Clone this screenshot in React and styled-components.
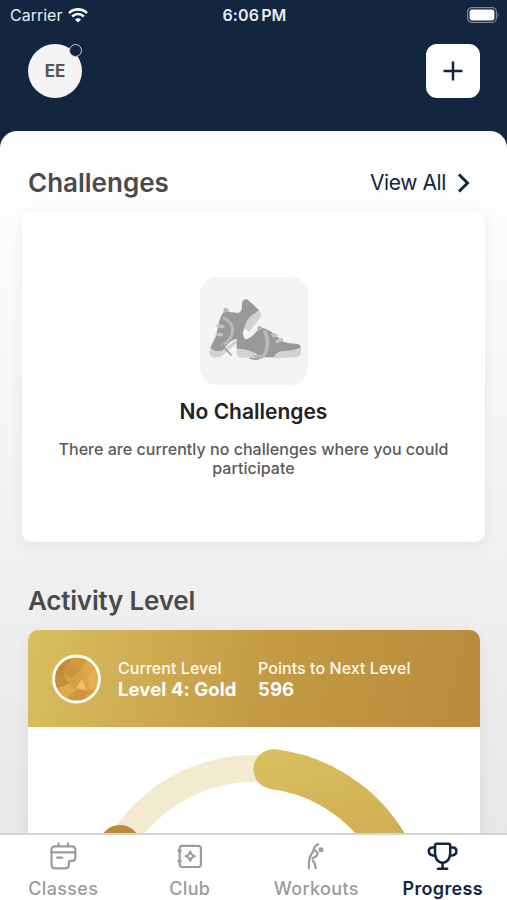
import React from "react";
import styled, { createGlobalStyle } from "styled-components";

const colors = {
  navy: "#13253f",
  white: "#ffffff",
  heading: "#4a4a4a",
  text: "#222222",
  muted: "#5a5a5a",
  tabIdle: "#9b9b9b",
  gold: "#d9bf5f",
  goldDark: "#b98b3b",
  goldPale: "#f3ebd0",
};

const GlobalStyle = createGlobalStyle`
  * {
    box-sizing: border-box;
  }
  body {
    margin: 0;
    background: ${colors.navy};
    font-family: Inter, "Liberation Sans", sans-serif;
  }
  h1, h2, h3, p {
    margin: 0;
  }
`;

const Screen = styled.div`
  display: flex;
  flex-direction: column;
  height: 900px;
  overflow: hidden;
  background: ${colors.navy};
`;

const StatusBar = styled.div`
  display: grid;
  grid-template-columns: 1fr auto 1fr;
  align-items: center;
  height: 30px;
  flex-shrink: 0;
  padding: 0 8px 0 10px;
  color: #e6edf5;
`;

const Carrier = styled.div`
  display: flex;
  align-items: center;
  gap: 6px;
  font-size: 16px;
`;

const Clock = styled.div`
  font-size: 16px;
  font-weight: 600;
  letter-spacing: 0.1px;
  word-spacing: -2px;
`;

const BatterySlot = styled.div`
  display: flex;
  justify-content: flex-end;
`;

const Header = styled.header`
  display: flex;
  justify-content: space-between;
  align-items: flex-start;
  height: 101px;
  flex-shrink: 0;
  padding: 14px 27px 0 28px;
`;

const Avatar = styled.div`
  position: relative;
  display: flex;
  align-items: center;
  justify-content: center;
  width: 54px;
  height: 54px;
  border-radius: 50%;
  background: #f4f4f4;
  color: #555555;
  font-size: 17px;
  font-weight: 700;
`;

const StatusDot = styled.span`
  position: absolute;
  top: 0;
  right: 0;
  width: 13px;
  height: 13px;
  border: 1.5px solid #cbd0d8;
  border-radius: 50%;
  background: ${colors.navy};
`;

const AddButton = styled.button`
  display: flex;
  align-items: center;
  justify-content: center;
  width: 54px;
  height: 54px;
  padding: 0;
  border: none;
  border-radius: 11px;
  background: ${colors.white};
  color: ${colors.navy};
`;

const Content = styled.main`
  display: flex;
  flex-direction: column;
  flex: 1;
  min-height: 0;
  overflow: hidden;
  border-radius: 17px 17px 0 0;
  background: linear-gradient(#ffffff, #fcfcfc 14%, #e7e7e7);
`;

const SectionHead = styled.div`
  display: flex;
  align-items: center;
  justify-content: space-between;
  height: 32px;
  flex-shrink: 0;
  margin-top: ${({ $top }) => $top}px;
  padding: 0 37px 0 28px;
`;

const SectionTitle = styled.h2`
  color: ${colors.heading};
  font-size: 26px;
  font-weight: 600;
  line-height: 32px;
  letter-spacing: ${({ $spacing }) => $spacing || 0}px;
`;

const ViewAll = styled.a`
  display: flex;
  align-items: center;
  gap: 11px;
  color: ${colors.navy};
  font-size: 21px;
  line-height: 32px;
  letter-spacing: -0.4px;
`;

const EmptyCard = styled.section`
  display: flex;
  flex-direction: column;
  align-items: center;
  flex-shrink: 0;
  height: 330px;
  margin: 13px 22px 0;
  padding-top: 65px;
  border-radius: 10px;
  background: ${colors.white};
  box-shadow: 0 3px 16px rgba(0, 0, 0, 0.06);
`;

const PictureTile = styled.div`
  display: flex;
  width: 108px;
  height: 108px;
  border-radius: 17px;
  background: #f4f4f4;
`;

const EmptyTitle = styled.h3`
  margin-top: 13px;
  color: ${colors.text};
  font-size: 21px;
  font-weight: 600;
  line-height: 28px;
`;

const EmptyText = styled.p`
  width: 420px;
  margin-top: 14px;
  color: ${colors.muted};
  font-size: 16px;
  font-weight: 500;
  line-height: 19px;
  letter-spacing: 0.03px;
  text-align: center;
`;

const LevelCard = styled.section`
  flex-shrink: 0;
  height: 420px;
  margin: 13px 27px 0 28px;
  overflow: hidden;
  border-radius: 10px;
  background: ${colors.white};
  box-shadow: 0 3px 16px rgba(0, 0, 0, 0.06);
`;

const LevelBanner = styled.div`
  display: flex;
  align-items: center;
  height: 97px;
  padding-left: 24px;
  background: linear-gradient(
    103deg,
    ${colors.gold} 0%,
    #c49a45 52%,
    ${colors.goldDark} 100%
  );
  color: ${colors.white};
`;

const Stat = styled.div`
  width: ${({ $width }) => $width}px;
  margin-left: ${({ $left }) => $left}px;
  padding-top: 2px;
  white-space: nowrap;
`;

const StatLabel = styled.div`
  color: #fffaf0;
  font-size: 16px;
  font-weight: 500;
  line-height: 20px;
  letter-spacing: 0.06px;
`;

const StatValue = styled.div`
  font-size: 18.5px;
  font-weight: 700;
  line-height: 23px;
  letter-spacing: 0.1px;
`;

const RingArea = styled.div`
  display: flex;
  justify-content: center;
`;

const TabBar = styled.nav`
  display: grid;
  grid-template-columns: repeat(4, 1fr);
  height: 67px;
  flex-shrink: 0;
  padding-right: 1px;
  border-top: 2px solid #d3d3d3;
  background: ${colors.white};
`;

const Tab = styled.div`
  display: flex;
  flex-direction: column;
  align-items: center;
  padding-top: 7px;
  color: ${({ $active }) => ($active ? colors.navy : colors.tabIdle)};
  font-size: 18px;
  font-weight: ${({ $active }) => ($active ? 600 : 500)};
  line-height: 22px;
  letter-spacing: 0.35px;
`;

const TabIcon = styled.svg`
  display: block;
  width: 32px;
  height: 28px;
  margin-bottom: 8px;
  overflow: visible;
  fill: none;
  stroke: currentColor;
  stroke-width: ${({ $weight }) => $weight || 2.2};
  stroke-linecap: round;
  stroke-linejoin: round;
`;

const WifiIcon = () => (
  <svg width="20" height="15" viewBox="0 0 20 15" fill="none" stroke="#f4f8fc">
    <path d="M1 5.1a12.8 12.8 0 0 1 18 0" strokeWidth="2.6" />
    <path d="M4.2 8.5a8.2 8.2 0 0 1 11.6 0" strokeWidth="2.5" />
    <path d="M10 14.6 6.9 11.5a4.4 4.4 0 0 1 6.2 0z" fill="#f4f8fc" stroke="none" />
  </svg>
);

const BatteryIcon = () => (
  <svg width="32" height="16" viewBox="0 0 32 16">
    <rect x="0.6" y="0.6" width="28.8" height="14.8" rx="4.2" fill="none" stroke="#7d8899" strokeWidth="1.2" />
    <rect x="2.6" y="2.6" width="24.8" height="10.8" rx="2.6" fill="#ffffff" />
    <path d="M30.6 5.8c1.4.7 1.4 3.7 0 4.4z" fill="#7d8899" />
  </svg>
);

const ShoesPicture = () => (
  <svg width="108" height="108" viewBox="30 35 324 324" fill="none" strokeLinecap="round" strokeLinejoin="round">
    {/* standing shoe */}
    <path d="M205 130 213 145 212 155 178 199 162 188 168 166z" fill="#d2d2d2" />
    <path d="M62 246 100 254 136 224 140 234 95 272Q82 280 68 276 57 271 58 260z" fill="#d2d2d2" />
    <path
      d="M98 142 112 139 145 143Q156 138 156 125 154 106 166 102 173 100 178 108L206 133Q204 140 188 148 170 162 166 178L158 204Q160 216 166 222H140L136 221Q116 228 99 255 76 262 61 247L78 212 88 166z"
      fill="#999999"
    />
    <path d="M101 130Q104 125 110 128L120 138 100 142z" fill="#b9b9b9" />
    {/* lying shoe */}
    <path d="M140 254 190 254 196 270 189 277H148Q138 270 140 254z" fill="#d2d2d2" />
    <path d="M190 276 256 276Q262 260 282 258L332 246Q337 270 322 275L260 279z" fill="#d2d2d2" />
    <path
      d="M140 252V220L167 222Q184 220 202 195 212 184 226 190L244 199 280 229Q300 236 321 235 334 238 331 248 306 257 278 258 260 260 253 275L208 276Q190 250 140 252z"
      fill="#999999"
    />
    <path d="M202 196Q199 180 210 181L218 188 206 197z" fill="#b9b9b9" />
    {/* laces */}
    <path d="M102 158Q127 171 128 195 127 222 98 240" stroke="#b9b9b9" strokeWidth="9" />
    <path d="M84 182 99 183M81 207 94 208M249 209 258 211M262 228 275 223" stroke="#c4c4c4" strokeWidth="10" />
    <path d="M225 199Q236 222 231 246 229 268 216 274 206 278 195 273" stroke="#b9b9b9" strokeWidth="11" />
    <path d="M99 239Q106 253 123 269M181 279Q193 283 207 280" stroke="#999999" strokeWidth="5" />
  </svg>
);

const LevelBadge = () => (
  <svg width="50" height="50" viewBox="0 0 50 50">
    <defs>
      <clipPath id="badge-clip">
        <circle cx="24.5" cy="25" r="22" />
      </clipPath>
    </defs>
    <g clipPath="url(#badge-clip)">
      <path d="M0 0h50v50H0z" fill="#d8a041" />
      <path d="M0 0h21L16 18 5 27z" fill="#c08a37" />
      <path d="M20 0h30L32 17 20 19z" fill="#d39a3c" />
      <path d="M16 7 28 16 20 24 10 18z" fill="#c99340" />
      <path d="M28 16 38 4 50 22 36 27z" fill="#deaa4c" />
      <path d="M3 26 11 20 17 30 4 36z" fill="#c58e3a" />
      <path d="M24 34 30 25 35 36z" fill="#ecc06a" />
      <path d="M30 17 34 35 50 37V24z" fill="#dba548" />
      <path d="M5 34 17 30 25 36 15 45z" fill="#dfaa4a" />
      <path d="M15 44 25 36 36 38 29 50z" fill="#cd953d" />
      <path d="M36 22 44 15 48 31 38 36z" fill="#e3b055" />
    </g>
    <circle cx="24.5" cy="25" r="23" fill="none" stroke="#fffdf5" strokeWidth="2.8" />
  </svg>
);

const ProgressRing = () => (
  <svg width="452" height="320" viewBox="28 727 452 320" fill="none">
    <defs>
      <linearGradient id="ring-gold" gradientUnits="userSpaceOnUse" x1="262" y1="758" x2="340" y2="1078">
        <stop offset="0" stopColor={colors.gold} />
        <stop offset="1" stopColor={colors.goldDark} />
      </linearGradient>
    </defs>
    <circle cx="254" cy="924" r="155.5" stroke={colors.goldPale} strokeWidth="27" />
    <path
      d="M273.5 769.2A155.5 155.5 0 1 1 120 844.9"
      stroke="url(#ring-gold)"
      strokeWidth="40"
      strokeLinecap="round"
    />
    <circle cx="120" cy="844.9" r="20" fill={colors.goldDark} />
  </svg>
);

const ClassesIcon = () => (
  <TabIcon viewBox="0 0 32 28">
    <path d="M18.5 26.3H7.7a3.2 3.2 0 0 1-3.2-3.2V7.5a3.2 3.2 0 0 1 3.2-3.2h17.4a3.2 3.2 0 0 1 3.2 3.2v8q0 3.4-3.2 3.4h-1.5a1.8 1.8 0 0 0-1.8 1.8v2.2q0 3.4-3.3 3.4z" />
    <path d="M4.6 10.4h23.6M11.6 1.4v2.8M21 1.4v2.8M10 15.6h5.2" />
  </TabIcon>
);

const ClubIcon = () => (
  <TabIcon viewBox="0 0 32 28">
    <rect x="5.7" y="3.8" width="21.2" height="21.2" rx="2.5" />
    <path d="M4.4 8.6h2.4M4.4 19.2h2.4" />
    <path d="M16.2 9.4Q17 13.2 20.8 14.2 17 15 16.2 19 15.4 15 11.6 14.2 15.4 13.2 16.2 9.4z" strokeWidth="2" />
  </TabIcon>
);

const WorkoutsIcon = () => (
  <TabIcon viewBox="0 0 32 28">
    <circle cx="21" cy="7.7" r="2.5" fill="currentColor" stroke="none" />
    <path d="M18.2 2.3Q14.2 3.8 13.2 9L9.8 15.6Q8.6 20.5 8.8 26.2" />
    <path d="M14.6 8.2 17.8 11 16.8 13.8 12.6 16.2" />
    <path d="M12.8 18.6 14.6 21.4 15.8 26.2" />
  </TabIcon>
);

const TrophyIcon = () => (
  <TabIcon viewBox="0 0 32 28" $weight={2.5}>
    <path d="M10 1.8h11.2q2 0 2 2v7.4c0 5.4-3 8.8-7.6 9.8-4.6-1-7.6-4.4-7.6-9.8V3.8q0-2 2-2z" />
    <path d="M8 5.6H5.4q-3.6 0-3.6 3.7 0 4.2 6.4 4.5M23.2 5.6h2.6q3.6 0 3.6 3.7 0 4.2-6.4 4.5M15.6 21v5.5M11 26.8h9.2" />
  </TabIcon>
);

const tabs = [
  { label: "Classes", Icon: ClassesIcon },
  { label: "Club", Icon: ClubIcon },
  { label: "Workouts", Icon: WorkoutsIcon },
  { label: "Progress", Icon: TrophyIcon, active: true },
];

const App = () => {
  return (
    <>
      <GlobalStyle />
      <Screen>
        <StatusBar>
          <Carrier>
            Carrier
            <WifiIcon />
          </Carrier>
          <Clock>6:06 PM</Clock>
          <BatterySlot>
            <BatteryIcon />
          </BatterySlot>
        </StatusBar>

        <Header>
          <Avatar>
            EE
            <StatusDot />
          </Avatar>
          <AddButton aria-label="Add">
            <svg width="20" height="20" viewBox="0 0 20 20" stroke="currentColor" strokeWidth="2.5">
              <path d="M10 .5v19M.5 10h19" />
            </svg>
          </AddButton>
        </Header>

        <Content>
          <SectionHead $top={36}>
            <SectionTitle>Challenges</SectionTitle>
            <ViewAll>
              View All
              <svg width="13" height="20" viewBox="0 0 13 20" fill="none" stroke="currentColor" strokeWidth="3">
                <path d="M2 1.5 10.5 10 2 18.5" />
              </svg>
            </ViewAll>
          </SectionHead>

          <EmptyCard>
            <PictureTile>
              <ShoesPicture />
            </PictureTile>
            <EmptyTitle>No Challenges</EmptyTitle>
            <EmptyText>
              There are currently no challenges where you could participate
            </EmptyText>
          </EmptyCard>

          <SectionHead $top={43}>
            <SectionTitle $spacing={-0.2}>Activity Level</SectionTitle>
          </SectionHead>

          <LevelCard>
            <LevelBanner>
              <LevelBadge />
              <Stat $left={16} $width={140}>
                <StatLabel>Current Level</StatLabel>
                <StatValue>Level 4: Gold</StatValue>
              </Stat>
              <Stat $left={0} $width={170}>
                <StatLabel>Points to Next Level</StatLabel>
                <StatValue>596</StatValue>
              </Stat>
            </LevelBanner>
            <RingArea>
              <ProgressRing />
            </RingArea>
          </LevelCard>
        </Content>

        <TabBar>
          {tabs.map(({ label, Icon, active }) => (
            <Tab key={label} $active={active}>
              <Icon />
              {label}
            </Tab>
          ))}
        </TabBar>
      </Screen>
    </>
  );
};

export default App;
